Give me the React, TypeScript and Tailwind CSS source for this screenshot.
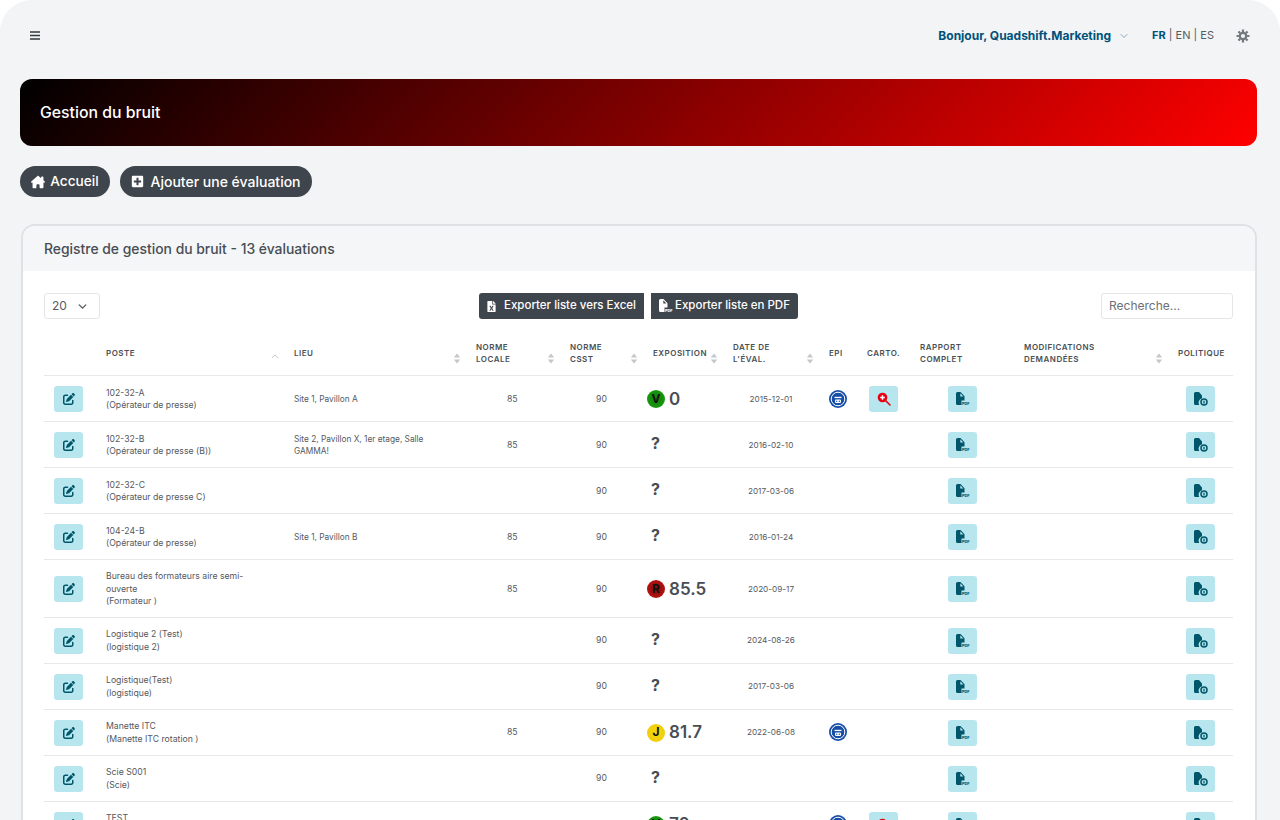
import { FaPlusSquare, FaFileExcel } from "react-icons/fa";
import { FaHouseChimney, FaPenToSquare } from "react-icons/fa6";
import { FiChevronDown } from "react-icons/fi";
import { ReactNode } from "react";

const font = "font-['Inter','Noto_Sans',sans-serif]";

type Row = {
  poste: string[];
  lieu?: string[];
  locale?: string;
  csst?: string;
  expo?: { code: string; value: string };
  date?: string;
  epi?: boolean;
  carto?: boolean;
};

const rows: Row[] = [
  { poste: ["102-32-A", "(Opérateur de presse)"], lieu: ["Site 1, Pavillon A"], locale: "85", csst: "90", expo: { code: "V", value: "0" }, date: "2015-12-01", epi: true, carto: true },
  { poste: ["102-32-B", "(Opérateur de presse (B))"], lieu: ["Site 2, Pavillon X, 1er etage, Salle", "GAMMA!"], locale: "85", csst: "90", date: "2016-02-10" },
  { poste: ["102-32-C", "(Opérateur de presse C)"], csst: "90", date: "2017-03-06" },
  { poste: ["104-24-B", "(Opérateur de presse)"], lieu: ["Site 1, Pavillon B"], locale: "85", csst: "90", date: "2016-01-24" },
  { poste: ["Bureau des formateurs aire semi-", "ouverte", "(Formateur )"], locale: "85", csst: "90", expo: { code: "R", value: "85.5" }, date: "2020-09-17" },
  { poste: ["Logistique 2 (Test)", "(logistique 2)"], csst: "90", date: "2024-08-26" },
  { poste: ["Logistique(Test)", "(logistique)"], csst: "90", date: "2017-03-06" },
  { poste: ["Manette ITC", "(Manette ITC rotation )"], locale: "85", csst: "90", expo: { code: "J", value: "81.7" }, date: "2022-06-08", epi: true },
  { poste: ["Scie S001", "(Scie)"], csst: "90" },
  { poste: ["TEST", "(Test)"], locale: "85", csst: "90", expo: { code: "V", value: "70" }, date: "2023-01-15", epi: true, carto: true },
];

const SortIcon = () => (
  <svg width="8" height="11" viewBox="0 0 8 11" className="shrink-0 self-end mb-[1px]">
    <path d="M4 .5 7.2 4.5H.8z M4 10.5 .8 6.5h6.4z" fill="#c4c7cb" />
  </svg>
);

const ChevronUp = () => (
  <svg width="8" height="5" viewBox="0 0 8 5" className="shrink-0 self-end mb-[6px]">
    <path d="M.8 4 4 1l3.2 3" fill="none" stroke="#c4c7cb" strokeWidth="1" />
  </svg>
);

const PdfIcon = ({ color, notch }: { color: string; notch: string }) => (
  <svg width="15" height="14" viewBox="0 0 15 14">
    <path d="M2.500 0H5.500L9.500 4.200V8.500H6.500V13H2.500A1.500 1.500 0 0 1 1 11.500V1.500A1.500 1.500 0 0 1 2.500 0z" fill={color} />
    <path d="M5.300 1.200V4.400H8.300z" fill={notch} />
    <text x="6.900" y="12.900" fontSize="3.900" fontWeight="800" fill={color} fontFamily="Inter, sans-serif">PDF</text>
  </svg>
);

const PolicyIcon = () => (
  <svg width="15" height="14" viewBox="0 0 15 14">
    <path d="M2.500 0H6l3 3.500v2.700A4.600 4.600 0 0 0 6.200 13H2.500A1.500 1.500 0 0 1 1 11.500V1.500A1.500 1.500 0 0 1 2.500 0z" fill="#00576b" />
    <circle cx="11" cy="10" r="3" fill="none" stroke="#00576b" strokeWidth="1.500" />
    <path d="M11 8.800v2.600" stroke="#00576b" strokeWidth="1.300" />
  </svg>
);

const EpiIcon = () => (
  <svg width="18" height="18" viewBox="0 0 18 18">
    <circle cx="9" cy="9" r="9" fill="#174ea6" />
    <circle cx="9" cy="9" r="6.800" fill="none" stroke="#fff" strokeWidth="1" />
    <rect x="5" y="5" width="8" height="9.500" rx="2.500" fill="#174ea6" />
    <rect x="5.500" y="6.800" width="7" height="1.300" fill="#fff" />
    <rect x="6" y="9.400" width="6" height="3.600" rx="1" fill="#fff" />
    <circle cx="7.700" cy="11.200" r=".7" fill="#174ea6" />
    <circle cx="10.300" cy="11.200" r=".7" fill="#174ea6" />
  </svg>
);

const ZoomIcon = () => (
  <svg width="14" height="14" viewBox="0 0 14 14">
    <path d="M8 8l5 5" stroke="#e60012" strokeWidth="1.600" strokeLinecap="round" />
    <circle cx="5.500" cy="5.500" r="4.800" fill="#e60012" />
    <path d="M5.500 3.200v4.600M3.200 5.500h4.600" stroke="#fff" strokeWidth="1.500" />
  </svg>
);

const ActionBtn = ({ children }: { children: ReactNode }) => (
  <div className="w-[29px] h-[26px] rounded-[3px] bg-[#b7e6ee] flex items-center justify-center text-[#00576b]">
    {children}
  </div>
);

const badgeColors: Record<string, string> = {
  V: "bg-[radial-gradient(circle,#147a0c,#18a80e)]",
  R: "bg-[radial-gradient(circle,#7a0a0a,#d01616)]",
  J: "bg-[radial-gradient(circle,#f5d90a,#eec80c)]",
};

const Th = ({ label, sort, chevron }: { label?: string[]; sort?: boolean; chevron?: boolean }) => (
  <th className="pl-[10px] pr-[5px] pb-[10px] pt-0 align-middle text-left">
    <div className="h-[25px] flex items-center justify-between">
      <div className="text-[8px] leading-[12px] font-semibold tracking-[0.5px] text-[#4a4f55]">
        {label?.map((l) => (
          <div key={l}>{l}</div>
        ))}
      </div>
      {sort && <SortIcon />}
      {chevron && <ChevronUp />}
    </div>
  </th>
);

export default function App() {
  return (
    <div className={`${font} w-[1280px] h-[820px] overflow-hidden bg-white`}>
      <div className="h-full rounded-t-[32px] bg-[#f2f4f6] px-5">
        <header className="h-[79px] flex items-center justify-between pb-[8px]">
          <svg width="10" height="9" viewBox="0 0 10 9" className="ml-[10px]">
            <path d="M0 1h10M0 4.500h10M0 8h10" stroke="#33383d" strokeWidth="1.500" />
          </svg>
          <div className="flex items-center mr-[10px]">
            <span className="text-[12px] font-bold text-[#00527a]">Bonjour, Quadshift.Marketing</span>
            <FiChevronDown className="ml-[7px] text-[#8fa7b8]" size={12} />
            <span className="ml-[22px] text-[11px] text-[#555b61]">
              <b className="font-bold text-[#00527a]">FR</b> | EN | ES
            </span>
            <svg width="14" height="14" viewBox="0 0 24 24" className="ml-[22px]" fill="none" stroke="#74797e" strokeWidth="3.800">
              <circle cx="12" cy="12" r="5.500" />
              <path d="M12 1v4M12 19v4M1 12h4M19 12h4M4.200 4.200l2.900 2.900M16.900 16.900l2.900 2.900M4.200 19.800l2.900-2.900M16.900 7.100l2.900-2.900" />
            </svg>
          </div>
        </header>

        <div className="h-[67px] w-[1237px] rounded-[12px] bg-[linear-gradient(135deg,#000000,#ff0000)] flex items-center pl-[20px] text-white text-[15.8px] font-medium">
          Gestion du bruit
        </div>

        <div className="flex gap-[10px] mt-5">
          <button className="h-[31px] w-[90px] rounded-full bg-[#3f454c] text-white text-[13.7px] font-medium flex items-center justify-center gap-[5px]">
            <FaHouseChimney size={14} />
            Accueil
          </button>
          <button className="h-[31px] w-[192px] rounded-full bg-[#3f454c] text-white text-[14px] font-medium flex items-center justify-center gap-[6px]">
            <FaPlusSquare size={13} />
            Ajouter une évaluation
          </button>
        </div>

        <section className="mt-[27px] ml-[1px] w-[1236px] rounded-t-[14px] border-2 border-[#dfe1e4] bg-white overflow-hidden">
          <div className="h-[45px] bg-[#f4f6f8] flex items-center pl-[21px] pt-[2px] text-[13.9px] font-medium text-[#484d53]">
            Registre de gestion du bruit - 13 évaluations
          </div>

          <div className="pl-[21px] pr-[22px] pt-[22px]">
            <div className="flex items-center justify-between h-[26px]">
              <div className="w-[56px] h-[26px] rounded-[3px] border border-[#e4e6e8] flex items-center justify-between pl-[7px] pr-[10px] text-[12px] text-[#555b61]">
                20
                <FiChevronDown size={13} strokeWidth={2.600} />
              </div>
              <div className="flex gap-[7px] ml-[75px]">
                <button className="h-[26px] w-[165px] rounded-l-[3px] bg-[#3f454c] text-white text-[11.5px] font-medium flex items-center justify-center gap-[7px]">
                  <FaFileExcel size={11} />
                  Exporter liste vers Excel
                </button>
                <button className="h-[26px] w-[147px] rounded-r-[3px] bg-[#3f454c] text-white text-[11.5px] font-medium flex items-center justify-center gap-[2px]">
                  <PdfIcon color="#ffffff" notch="#3f454c" />
                  Exporter liste en PDF
                </button>
              </div>
              <div className="w-[132px] h-[26px] rounded-[3px] border border-[#e4e6e8] flex items-center pl-[7px] text-[12px] text-[#6b7075]">
                Recherche...
              </div>
            </div>

            <table className="mt-[21px] w-[1189px] table-fixed border-collapse">
              <colgroup>
                <col className="w-[52px]" />
                <col className="w-[188px]" />
                <col className="w-[182px]" />
                <col className="w-[94px]" />
                <col className="w-[83px]" />
                <col className="w-[80px]" />
                <col className="w-[96px]" />
                <col className="w-[38px]" />
                <col className="w-[53px]" />
                <col className="w-[104px]" />
                <col className="w-[154px]" />
                <col className="w-[65px]" />
              </colgroup>
              <thead>
                <tr className="h-[35px] border-b border-[#e6e8ea]">
                  <Th />
                  <Th label={["POSTE"]} chevron />
                  <Th label={["LIEU"]} sort />
                  <Th label={["NORME", "LOCALE"]} sort />
                  <Th label={["NORME", "CSST"]} sort />
                  <Th label={["EXPOSITION"]} sort />
                  <Th label={["DATE DE", "L'ÉVAL."]} sort />
                  <Th label={["EPI"]} />
                  <Th label={["CARTO."]} />
                  <Th label={["RAPPORT", "COMPLET"]} />
                  <Th label={["MODIFICATIONS", "DEMANDÉES"]} sort />
                  <Th label={["POLITIQUE"]} />
                </tr>
              </thead>
              <tbody className="text-[8.7px] leading-[12.5px] text-[#55595e]">
                {rows.map((r) => (
                  <tr key={r.poste[0]} className="border-b border-[#e6e8ea]">
                    <td className="pl-[10px] pt-[10px] pb-[9px]">
                      <ActionBtn>
                        <FaPenToSquare size={12} />
                      </ActionBtn>
                    </td>
                    <td className="px-[10px] pt-[10px] pb-[9px]">
                      {r.poste.map((l) => (
                        <div key={l}>{l}</div>
                      ))}
                    </td>
                    <td className="px-[10px] pt-[1px] text-[8.3px]">
                      {r.lieu?.map((l) => (
                        <div key={l}>{l}</div>
                      ))}
                    </td>
                    <td className="pl-[41px] pt-[1px]">{r.locale}</td>
                    <td className="pl-[36px] pt-[1px]">{r.csst}</td>
                    <td className="pl-[4px] pt-[1px]">
                      {r.expo ? (
                        <div className="flex items-center gap-[4px]">
                          <span className={`w-[18px] h-[18px] rounded-full flex items-center justify-center text-[12px] font-bold text-[#111] ${badgeColors[r.expo.code]}`}>
                            {r.expo.code}
                          </span>
                          <span className="text-[17px] font-semibold text-[#484d53]">{r.expo.value}</span>
                        </div>
                      ) : (
                        <span className="ml-[4px] text-[16px] font-bold text-[#484d53]">?</span>
                      )}
                    </td>
                    <td className="text-center pt-[1px] text-[8.2px]">{r.date}</td>
                    <td className="text-center">{r.epi && <div className="flex justify-center"><EpiIcon /></div>}</td>
                    <td className="pt-[1px]">
                      {r.carto && (
                        <div className="flex justify-center">
                          <ActionBtn>
                            <ZoomIcon />
                          </ActionBtn>
                        </div>
                      )}
                    </td>
                    <td className="pl-[38px] pt-[1px]">
                      <ActionBtn>
                        <PdfIcon color="#00576b" notch="#b7e6ee" />
                      </ActionBtn>
                    </td>
                    <td />
                    <td className="pt-[1px]">
                      <div className="flex justify-center -ml-[1px]">
                        <ActionBtn>
                          <PolicyIcon />
                        </ActionBtn>
                      </div>
                    </td>
                  </tr>
                ))}
              </tbody>
            </table>
          </div>
        </section>
      </div>
    </div>
  );
}
